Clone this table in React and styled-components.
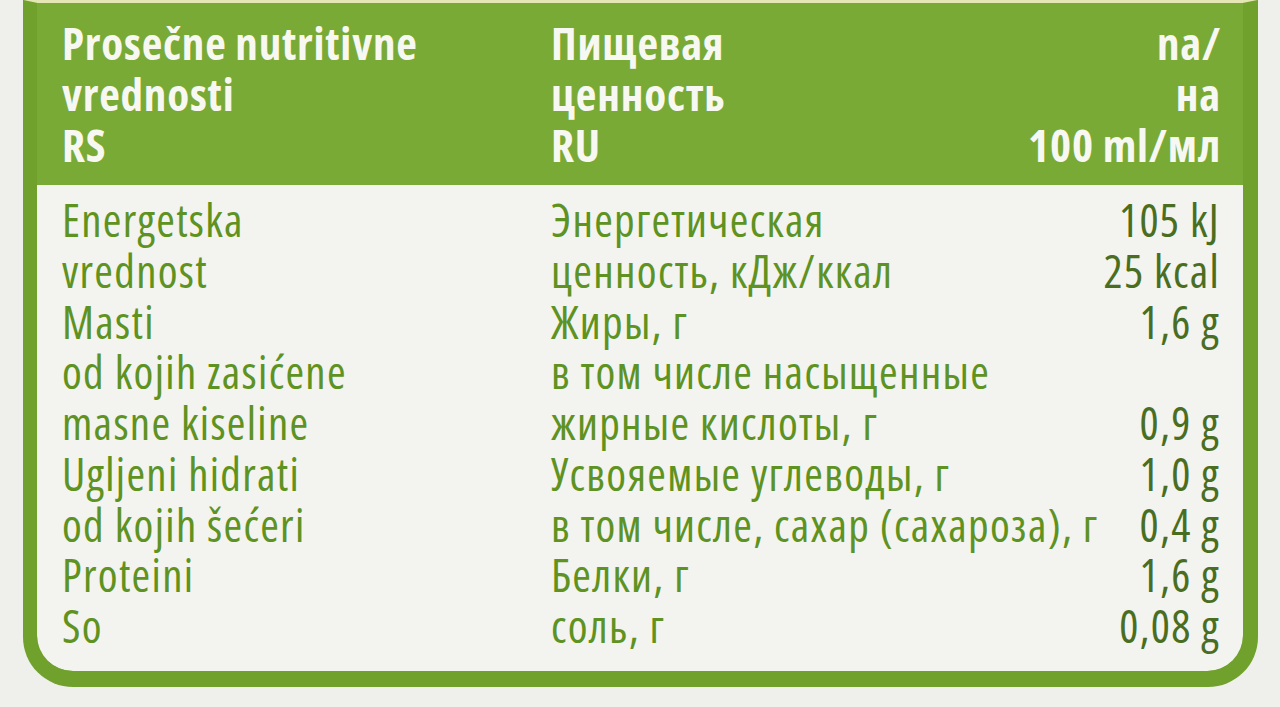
import React from "react";
import styled, { createGlobalStyle } from "styled-components";

const Global = createGlobalStyle`
  html, body {
    margin: 0;
    padding: 0;
    background: #eeeeeb;
    overflow: hidden;
  }
  #root {
    width: 1280px;
    height: 707px;
    overflow: hidden;
  }
`;

const Page = styled.div`
  width: 1280px;
  height: 707px;
  background: #efefec;
  padding-left: 23px;
  box-sizing: border-box;
  font-family: "Open Sans", "Noto Sans", sans-serif;
  font-stretch: 75%;
`;

const Label = styled.section`
  width: 1235px;
  box-sizing: border-box;
  border: 14px solid #70a12c;
  border-right-width: 15px;
  border-bottom-width: 16px;
  border-top: 3px solid #e4e6b4;
  border-radius: 0 0 50px 50px;
  background: #70a12c;
  overflow: hidden;
`;

const Grid = styled.div`
  display: grid;
  grid-template-columns: 489px 1fr auto;
  font-size: 45px;
  line-height: 51px;
`;

const Header = styled(Grid)`
  background: #7aaa36;
  color: #f7f8f2;
  font-weight: 700;
  letter-spacing: 0.8px;
  padding: 14px 22px 15px 25px;
`;

const Body = styled(Grid)`
  background: #f3f3f0;
  color: #5e9221;
  font-weight: 400;
  letter-spacing: 1.3px;
  line-height: 50.75px;
  padding: 10px 23px 19px 25px;
  border-radius: 0 0 36px 36px;
`;

const Cell = styled.div`
  white-space: nowrap;
  text-align: ${(p) => (p.$right ? "right" : "left")};
  color: ${(p) => (p.$dark ? "#4a6e21" : "inherit")};
`;

const Line = styled.div``;

const rows = [
  ["Energetska", "Энергетическая", "105 kJ"],
  ["vrednost", "ценность, кДж/ккал", "25 kcal"],
  ["Masti", "Жиры, г", "1,6 g"],
  ["od kojih zasićene", "в том числе насыщенные", ""],
  ["masne kiseline", "жирные кислоты, г", "0,9 g"],
  ["Ugljeni hidrati", "Усвояемые углеводы, г", "1,0 g"],
  ["od kojih šećeri", "в том числе, сахар (сахароза), г", "0,4 g"],
  ["Proteini", "Белки, г", "1,6 g"],
  ["So", "соль, г", "0,08 g"],
];

const head = [
  ["Prosečne nutritivne", "vrednosti", "RS"],
  ["Пищевая", "ценность", "RU"],
  ["na/", "на", "100 ml/мл"],
];

export default function App() {
  return (
    <>
      <Global />
      <Page>
        <Label>
          <Header>
            {head.map((col, i) => (
              <Cell key={i} $right={i === 2}>
                {col.map((t) => (
                  <Line key={t}>{t}</Line>
                ))}
              </Cell>
            ))}
          </Header>
          <Body>
            {rows.map((r) => (
              <React.Fragment key={r[0]}>
                <Cell>{r[0]}</Cell>
                <Cell>{r[1]}</Cell>
                <Cell $right $dark>
                  {r[2] || "\u00a0"}
                </Cell>
              </React.Fragment>
            ))}
          </Body>
        </Label>
      </Page>
    </>
  );
}
